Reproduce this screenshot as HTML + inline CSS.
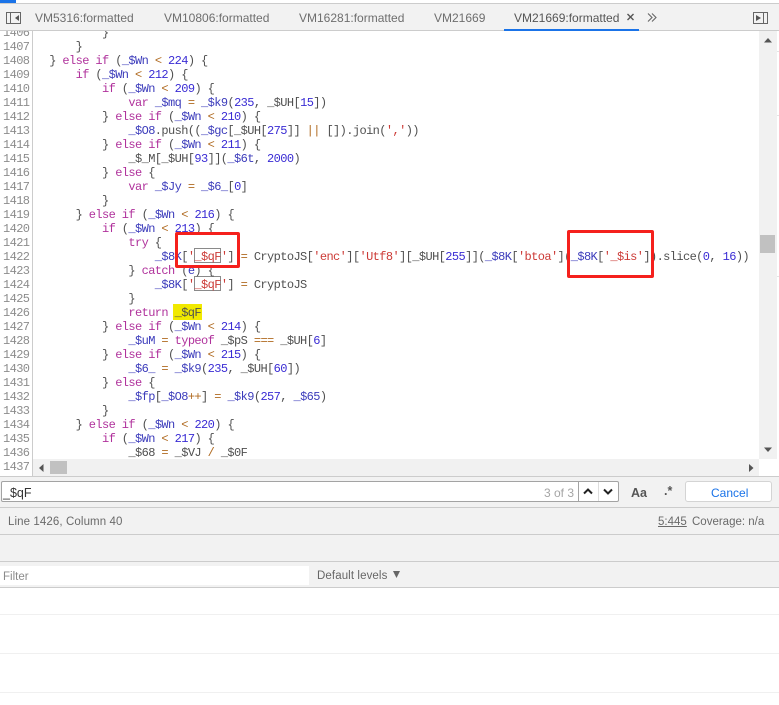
<!DOCTYPE html>
<html><head><meta charset="utf-8"><style>
html,body{margin:0;padding:0;width:779px;height:705px;overflow:hidden;background:#fff}
body{position:relative;font-family:"Liberation Sans",sans-serif;font-size:12px;color:#5a5a5a}
.a{position:absolute}
.t{position:absolute;white-space:nowrap;line-height:14px}
#code div{position:absolute;white-space:pre;font:12px/14px "Liberation Mono",monospace;letter-spacing:-.6px;color:#505050;height:14px}
#nums div{position:absolute;left:3px;font:12px/14px "Liberation Mono",monospace;letter-spacing:-.6px;color:#8c8c8c;height:14px}
.k{color:#b0329c}.v{color:#3b3bbb}.n{color:#3a2cd4}.s{color:#cc3a36}.o{color:#b06a20}
</style></head><body>
<div class="a" style="left:0;top:0;width:779px;height:4px;background:#fff"></div>
<div class="a" style="left:0;top:0;width:16px;height:3px;background:#1a73e8"></div>
<div class="a" style="left:0;top:3px;width:779px;height:1px;background:#ccc"></div>
<div class="a" style="left:0;top:4px;width:779px;height:26px;background:#f2f2f2"></div>
<div class="a" style="left:0;top:30px;width:779px;height:1px;background:#ccc"></div>
<svg class="a" style="left:0;top:4px" width="30" height="26"><rect x="6.5" y="8.5" width="14" height="11" fill="none" stroke="#666"/><path d="M10.5 8.5v11" stroke="#666"/><path d="M19 11v6l-4-3z" fill="#555"/></svg>
<span class="t" style="left:35px;top:11px;color:#6e6e6e">VM5316:formatted</span>
<span class="t" style="left:164px;top:11px;color:#6e6e6e">VM10806:formatted</span>
<span class="t" style="left:299px;top:11px;color:#6e6e6e">VM16281:formatted</span>
<span class="t" style="left:434px;top:11px;color:#6e6e6e">VM21669</span>
<span class="t" style="left:514px;top:11px;color:#555">VM21669:formatted</span>
<div class="a" style="left:504px;top:29px;width:135px;height:2px;background:#1a73e8"></div>
<svg class="a" style="left:625px;top:11px" width="40" height="14"><path d="M2.5 3l6 6M8.5 3l-6 6" stroke="#555" stroke-width="1.4" fill="none"/><path d="M23 2.5l4 4-4 4M27 2.5l4 4-4 4" stroke="#666" stroke-width="1.1" fill="none"/></svg>
<svg class="a" style="left:752px;top:4px" width="26" height="26"><rect x="1.5" y="8.5" width="14" height="11" fill="none" stroke="#666"/><path d="M11.5 8.5v11" stroke="#666"/><path d="M4 11v6l5-3z" fill="#555"/></svg>

<div class="a" style="left:32px;top:31px;width:1px;height:445px;background:#ccc"></div>
<div id="nums" class="a" style="left:0;top:31px;width:32px;height:445px;overflow:hidden">
<div style="top:-5px">1406</div><div style="top:9px">1407</div><div style="top:23px">1408</div><div style="top:37px">1409</div><div style="top:51px">1410</div><div style="top:65px">1411</div><div style="top:79px">1412</div><div style="top:93px">1413</div><div style="top:107px">1414</div><div style="top:121px">1415</div><div style="top:135px">1416</div><div style="top:149px">1417</div><div style="top:163px">1418</div><div style="top:177px">1419</div><div style="top:191px">1420</div><div style="top:205px">1421</div><div style="top:219px">1422</div><div style="top:233px">1423</div><div style="top:247px">1424</div><div style="top:261px">1425</div><div style="top:275px">1426</div><div style="top:289px">1427</div><div style="top:303px">1428</div><div style="top:317px">1429</div><div style="top:331px">1430</div><div style="top:345px">1431</div><div style="top:359px">1432</div><div style="top:373px">1433</div><div style="top:387px">1434</div><div style="top:401px">1435</div><div style="top:415px">1436</div><div style="top:429px">1437</div>
</div>

<div class="a" style="left:173px;top:304px;width:29px;height:16px;background:#f1e900"></div>
<div class="a" style="left:194px;top:248px;width:25px;height:13px;border:1px solid #8a8a8a"></div>
<div class="a" style="left:194px;top:276px;width:25px;height:13px;border:1px solid #8a8a8a"></div>

<div id="code" class="a" style="left:0;top:31px;width:759px;height:428px;overflow:hidden">
<div style="left:102px;top:-5px">}</div>
<div style="left:75.6px;top:9px">}</div>
<div style="left:49.2px;top:23px">} <span class="k">else if</span> (<span class="v">_$Wn</span> <span class="o">&lt;</span> <span class="n">224</span>) {</div>
<div style="left:75.6px;top:37px"><span class="k">if</span> (<span class="v">_$Wn</span> <span class="o">&lt;</span> <span class="n">212</span>) {</div>
<div style="left:102px;top:51px"><span class="k">if</span> (<span class="v">_$Wn</span> <span class="o">&lt;</span> <span class="n">209</span>) {</div>
<div style="left:128.4px;top:65px"><span class="k">var</span> <span class="v">_$mq</span> <span class="o">=</span> <span class="v">_$k9</span>(<span class="n">235</span>, _$UH[<span class="n">15</span>])</div>
<div style="left:102px;top:79px">} <span class="k">else if</span> (<span class="v">_$Wn</span> <span class="o">&lt;</span> <span class="n">210</span>) {</div>
<div style="left:128.4px;top:93px"><span class="v">_$O8</span>.push((<span class="v">_$gc</span>[_$UH[<span class="n">275</span>]] <span class="o">||</span> []).join(<span class="s">','</span>))</div>
<div style="left:102px;top:107px">} <span class="k">else if</span> (<span class="v">_$Wn</span> <span class="o">&lt;</span> <span class="n">211</span>) {</div>
<div style="left:128.4px;top:121px">_$_M[_$UH[<span class="n">93</span>]](<span class="v">_$6t</span>, <span class="n">2000</span>)</div>
<div style="left:102px;top:135px">} <span class="k">else</span> {</div>
<div style="left:128.4px;top:149px"><span class="k">var</span> <span class="v">_$Jy</span> <span class="o">=</span> <span class="v">_$6_</span>[<span class="n">0</span>]</div>
<div style="left:102px;top:163px">}</div>
<div style="left:75.6px;top:177px">} <span class="k">else if</span> (<span class="v">_$Wn</span> <span class="o">&lt;</span> <span class="n">216</span>) {</div>
<div style="left:102px;top:191px"><span class="k">if</span> (<span class="v">_$Wn</span> <span class="o">&lt;</span> <span class="n">213</span>) {</div>
<div style="left:128.4px;top:205px"><span class="k">try</span> {</div>
<div style="left:154.8px;top:219px"><span class="v">_$8K</span>[<span class="s">'_$qF'</span>] <span class="o">=</span> CryptoJS[<span class="s">'enc'</span>][<span class="s">'Utf8'</span>][_$UH[<span class="n">255</span>]](<span class="v">_$8K</span>[<span class="s">'btoa'</span>](<span class="v">_$8K</span>[<span class="s">'_$is'</span>]).slice(<span class="n">0</span>, <span class="n">16</span>))</div>
<div style="left:128.4px;top:233px">} <span class="k">catch</span> (<span class="v">e</span>) {</div>
<div style="left:154.8px;top:247px"><span class="v">_$8K</span>[<span class="s">'_$qF'</span>] <span class="o">=</span> CryptoJS</div>
<div style="left:128.4px;top:261px">}</div>
<div style="left:128.4px;top:275px"><span class="k">return</span> _$qF</div>
<div style="left:102px;top:289px">} <span class="k">else if</span> (<span class="v">_$Wn</span> <span class="o">&lt;</span> <span class="n">214</span>) {</div>
<div style="left:128.4px;top:303px"><span class="v">_$uM</span> <span class="o">=</span> <span class="k">typeof</span> _$pS <span class="o">===</span> _$UH[<span class="n">6</span>]</div>
<div style="left:102px;top:317px">} <span class="k">else if</span> (<span class="v">_$Wn</span> <span class="o">&lt;</span> <span class="n">215</span>) {</div>
<div style="left:128.4px;top:331px"><span class="v">_$6_</span> <span class="o">=</span> <span class="v">_$k9</span>(<span class="n">235</span>, _$UH[<span class="n">60</span>])</div>
<div style="left:102px;top:345px">} <span class="k">else</span> {</div>
<div style="left:128.4px;top:359px"><span class="v">_$fp</span>[<span class="v">_$O8</span><span class="o">++</span>] <span class="o">=</span> <span class="v">_$k9</span>(<span class="n">257</span>, <span class="v">_$65</span>)</div>
<div style="left:102px;top:373px">}</div>
<div style="left:75.6px;top:387px">} <span class="k">else if</span> (<span class="v">_$Wn</span> <span class="o">&lt;</span> <span class="n">220</span>) {</div>
<div style="left:102px;top:401px"><span class="k">if</span> (<span class="v">_$Wn</span> <span class="o">&lt;</span> <span class="n">217</span>) {</div>
<div style="left:128.4px;top:415px">_$68 <span class="o">=</span> _$VJ <span class="o">/</span> _$0F</div>
</div>

<div class="a" style="left:759px;top:31px;width:18px;height:428px;background:#f1f1f1"></div>
<div class="a" style="left:760px;top:235px;width:15px;height:18px;background:#c1c1c1"></div>
<svg class="a" style="left:759px;top:31px" width="18" height="428"><path d="M5 11.5h8L9 7z" fill="#555"/><path d="M5 416.5h8L9 421z" fill="#555"/></svg>
<div class="a" style="left:777px;top:51px;width:2px;height:1px;background:#e4e4e4"></div>
<div class="a" style="left:777px;top:115px;width:2px;height:1px;background:#e4e4e4"></div>
<div class="a" style="left:777px;top:276px;width:2px;height:1px;background:#e4e4e4"></div>

<div class="a" style="left:33px;top:459px;width:726px;height:17px;background:#f1f1f1"></div>
<div class="a" style="left:50px;top:461px;width:17px;height:13px;background:#c1c1c1"></div>
<svg class="a" style="left:33px;top:459px" width="726" height="17"><path d="M10.5 5v8L6 9z" fill="#555"/><path d="M716 5v8l4.5-4z" fill="#555"/></svg>

<div class="a" style="left:0;top:476px;width:779px;height:59px;background:#f2f2f2"></div>
<div class="a" style="left:0;top:476px;width:779px;height:1px;background:#ccc"></div>
<div class="a" style="left:1px;top:481px;width:616px;height:19px;background:#fff;border:1px solid #a3a3a3;border-radius:2px"></div>
<span class="t" style="left:3px;top:486px;color:#333;font-size:12.5px">_$qF</span>
<span class="t" style="left:544px;top:486px;color:#a5a5a5">3 of 3</span>
<div class="a" style="left:578px;top:482px;width:1px;height:19px;background:#a3a3a3"></div>
<div class="a" style="left:598px;top:482px;width:1px;height:19px;background:#ddd"></div>
<svg class="a" style="left:579px;top:482px" width="39" height="19"><path d="M5 11.5l4-4 4 4" stroke="#222" stroke-width="2" fill="none"/><path d="M25 7.5l4 4 4-4" stroke="#222" stroke-width="2" fill="none"/></svg>
<span class="t" style="left:631px;top:486px;color:#555;font-weight:bold;font-size:12.5px">Aa</span>
<span class="t" style="left:664px;top:484px;color:#555;font-weight:bold;font-size:12.5px">.*</span>
<div class="a" style="left:685px;top:481px;width:85px;height:19px;background:#fff;border:1px solid #d4d4d4;border-radius:3px"></div>
<span class="t" style="left:711px;top:486px;color:#1a73e8">Cancel</span>
<div class="a" style="left:0;top:507px;width:779px;height:1px;background:#ccc"></div>
<span class="t" style="left:8px;top:515px;color:#6a6a6a;font-size:11.5px;letter-spacing:.1px">Line 1426, Column 40</span>
<span class="t" style="left:658px;top:515px;color:#6a6a6a;text-decoration:underline;font-size:11.5px">5:445</span>
<span class="t" style="left:692px;top:515px;color:#6a6a6a;font-size:11.5px">Coverage: n/a</span>
<div class="a" style="left:0;top:534px;width:779px;height:1px;background:#ccc"></div>

<div class="a" style="left:0;top:535px;width:779px;height:53px;background:#f2f2f2"></div>
<div class="a" style="left:0;top:561px;width:779px;height:1px;background:#ccc"></div>
<div class="a" style="left:0;top:566px;width:309px;height:19px;background:#fff"></div>
<span class="t" style="left:3px;top:570px;color:#8a8a8a;font-size:11.5px">Filter</span>
<span class="t" style="left:317px;top:569px;color:#666;font-size:11.5px;letter-spacing:.1px">Default levels</span>
<svg class="a" style="left:392px;top:570px" width="10" height="10"><path d="M1 1h7L4.5 8z" fill="#666"/></svg>
<div class="a" style="left:0;top:587px;width:779px;height:1px;background:#ccc"></div>
<div class="a" style="left:0;top:614px;width:779px;height:1px;background:#f0f0f0"></div>
<div class="a" style="left:0;top:653px;width:779px;height:1px;background:#f0f0f0"></div>
<div class="a" style="left:0;top:692px;width:779px;height:1px;background:#f0f0f0"></div>

<div class="a" style="left:175px;top:232px;width:59px;height:30px;border:3px solid #f5201c;border-radius:2px"></div>
<div class="a" style="left:567px;top:230px;width:81px;height:42px;border:3px solid #f5201c;border-radius:2px"></div>
</body></html>
